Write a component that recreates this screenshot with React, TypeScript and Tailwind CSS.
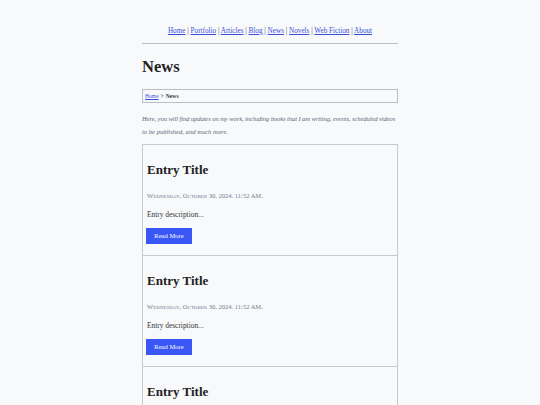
import React from "react";

const links = ["Home", "Portfolio", "Articles", "Blog", "News", "Novels", "Web Fiction", "About"];

function Entry() {
  return (
    <div className="border border-[#c4c9d2] px-[3px] pt-[13px] pb-[11px] -mt-px first:mt-0">
      <h2 className="pl-px text-[13px] font-bold leading-[24px] text-[#222]">Entry Title</h2>
      <div className="mt-[9px] pl-px text-[6.5px] leading-[10px] text-[#6f7d8f] [font-variant:small-caps]">
        Wednesday, October 30, 2024. 11:52 AM.
      </div>
      <p className="mt-[9px] pl-px text-[7.4px] leading-[10px] text-[#333]">Entry description...</p>
      <button className="mt-[8px] flex h-[16px] w-[46px] items-center justify-center bg-[#3a57f5] text-[6.6px] text-white">
        Read More
      </button>
    </div>
  );
}

export default function App() {
  return (
    <div className="min-h-[405px] bg-[#f8f9fb] font-['Liberation_Serif',serif]">
      <div className="mx-auto w-[256px]">
        <nav className="border-b border-[#b9bdc4] pt-[25px] pb-[6px] text-center text-[7.2px] leading-[12px] text-[#444]">
          {links.map((l, i) => (
            <span key={l}>
              <a href="#" className="text-[#3b4fd8] underline">
                {l}
              </a>
              {i < links.length - 1 ? " | " : ""}
            </span>
          ))}
        </nav>
        <h1 className="mt-[13px] text-[16.5px] font-bold leading-[20px] text-[#222]">News</h1>
        <div className="mt-[12px] flex h-[14px] items-center border border-[#b9bdc4] px-[2px] text-[5.6px] text-[#333]">
          <a href="#" className="text-[#3b4fd8] underline">
            Home
          </a>
          <span className="mx-[2px]">&gt;</span>
          <span className="font-bold">News</span>
        </div>
        <p className="mt-[9px] text-[6.6px] italic leading-[13px] text-[#5d6878]">
          <span className="block whitespace-nowrap tracking-[-0.1px]">
            Here, you will find updates on my work, including books that I am writing, events, scheduled videos
          </span>
          <span className="block">to be published, and much more.</span>
        </p>
        <div className="mt-[6px] flex flex-col">
          <Entry />
          <Entry />
          <Entry />
        </div>
      </div>
    </div>
  );
}
